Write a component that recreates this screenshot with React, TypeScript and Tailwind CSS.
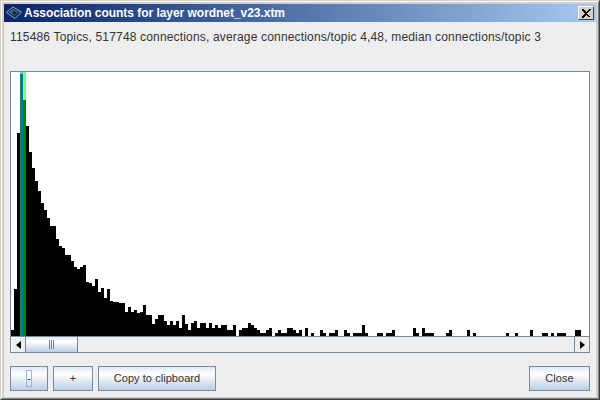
const bars: [number, number][] = [
  [11, 330], [14, 289], [17, 133], [26, 126], [29, 152], [32, 168], [35, 181], [38, 191], [41, 203], [44, 210], [47, 218], [50, 226], [53, 226], [56, 239], [59, 246], [62, 248], [65, 255], [68, 255], [71, 261], [74, 267], [77, 269], [80, 267], [83, 265], [86, 282], [89, 283], [92, 286], [95, 279], [98, 292], [101, 288], [104, 298], [107, 289], [110, 301], [113, 302], [116, 302], [119, 303], [122, 303], [125, 312], [128, 307], [131, 312], [134, 310], [137, 313], [140, 312], [143, 305], [146, 315],
  [149, 315], [152, 324], [155, 319], [158, 315], [161, 315], [164, 321], [167, 325], [170, 321], [173, 325], [176, 321], [179, 328], [182, 315], [185, 324], [188, 330], [191, 323], [194, 321], [197, 328], [200, 323], [203, 323], [206, 328], [209, 323], [212, 328], [215, 325], [218, 328], [221, 325], [224, 325], [227, 330], [230, 330], [233, 325], [239, 330], [242, 328], [245, 328], [248, 323], [251, 325], [254, 328], [257, 330], [260, 333], [263, 333], [266, 330], [269, 328], [275, 333], [278, 330], [281, 333], [284, 333], [287, 328], [290, 328], [293, 330], [296, 333], [299, 330],
  [305, 328], [311, 333], [320, 330], [323, 333], [329, 333], [332, 333], [335, 330], [344, 330], [347, 333], [353, 333], [356, 333], [359, 333], [362, 325], [365, 333], [377, 333], [380, 333], [386, 333], [389, 333], [392, 330], [413, 328], [416, 333], [422, 328], [425, 333], [428, 333], [431, 333], [446, 333], [449, 330], [467, 330], [473, 333], [506, 333], [515, 333], [530, 330], [542, 333], [545, 333], [551, 333], [557, 333], [560, 333], [563, 333], [575, 330], [578, 330],
];

function Btn({ w, children }: { w: string; children: React.ReactNode }) {
  return (
    <button className={`${w} h-[25px] border border-[#7a8a99] bg-gradient-to-b from-[#dde8f3] via-[#ffffff] via-30% to-[#b8cfe5] flex items-center justify-center text-[11px] tracking-[0.05px] text-[#333333] font-['Liberation_Sans',sans-serif]`}>
      {children}
    </button>
  );
}

export default function App() {
  return (
    <div className="w-[600px] h-[400px] border border-t-[#d4d0c8] border-l-[#d4d0c8] border-r-[#404040] border-b-[#404040] overflow-hidden">
      <div className="w-full h-full border border-t-white border-l-white border-r-[#808080] border-b-[#808080] bg-[#d4d0c8] p-[2px] flex flex-col">
        <div className="h-[18px] shrink-0 flex items-center bg-gradient-to-r from-[#0a246a] to-[#a6caf0] pl-[2px] pr-[2px]">
          <svg width="16" height="14" viewBox="0 0 16 14" className="shrink-0">
            <path d="M0.5 6.5 L7 1 L15.5 6 L9 12.5 Z" fill="#16294f" stroke="#8fb0c8" strokeWidth="1" />
            <path d="M3 6.5 L7 3 L12.5 6 L8.5 9.5 Z" fill="#3f6f8f" />
            <path d="M6 7 L8 5 L11 6.5 L8.5 8.5 Z" fill="#0c1a30" />
          </svg>
          <span className="ml-[2px] text-white font-bold text-[12px] tracking-[-0.04px] leading-none font-['Liberation_Sans',sans-serif] flex-1 whitespace-nowrap">
            Association counts for layer wordnet_v23.xtm
          </span>
          <div className="w-[16px] h-[14px] bg-[#d4d0c8] border border-t-white border-l-white border-r-[#404040] border-b-[#404040] flex items-center justify-center">
            <svg width="10" height="9" viewBox="0 0 10 9">
              <path d="M1 0.5 L8.5 8.5 M2 0.5 L9.5 8.5 M8.5 0.5 L1 8.5 M9.5 0.5 L2 8.5" stroke="#000" strokeWidth="1" shapeRendering="crispEdges" />
            </svg>
          </div>
        </div>
        <div className="flex-1 bg-[#eeeeee] flex flex-col pl-[6px] pr-[6px] pb-[6px]">
          <div className="h-[29px] flex items-center text-[12px] tracking-[0.17px] text-[#333333] font-['Liberation_Sans',sans-serif] whitespace-nowrap">
            115486 Topics, 517748 connections, average connections/topic 4,48, median connections/topic 3
          </div>
          <div className="mt-[20px] h-[282px] w-[580px] border border-[#7a8a99] flex flex-col">
            <div className="h-[264px] bg-white border-b border-b-[#7a8a99] box-content">
              <svg width="578" height="264" viewBox="11 72 578 264" shapeRendering="crispEdges" className="block">
                {bars.map(([x, top]) => (
                  <rect key={x} x={x} y={top} width="3" height={336 - top} fill="#000" />
                ))}
                <rect x="20" y="72" width="3" height="264" fill="#008080" />
                <rect x="20" y="72" width="3" height="2" fill="#40e0e0" />
                <rect x="23" y="72" width="3" height="28" fill="#80ff80" />
                <rect x="23" y="100" width="3" height="236" fill="#008000" />
              </svg>
            </div>
            <div className="flex-1 flex bg-[#eeeeee]">
              <div className="w-[15px] flex items-center justify-center border-r border-r-[#7a8a99] border-t border-l border-t-white border-l-white">
                <svg width="5" height="8" viewBox="0 0 5 8"><path d="M5 0 L5 8 L0 4 Z" fill="#000" /></svg>
              </div>
              <div className="w-[53px] border-x border-[#6382bf] bg-gradient-to-b from-[#dde8f3] via-[#ffffff] via-30% to-[#b8cfe5] flex items-center justify-center gap-[1px] -ml-[1px]">
                <div className="w-[1px] h-[9px] bg-[#6382bf]" />
                <div className="w-[1px] h-[9px] bg-[#6382bf]" />
                <div className="w-[1px] h-[9px] bg-[#6382bf]" />
              </div>
              <div className="flex-1" />
              <div className="w-[15px] flex items-center justify-center border-l border-l-[#7a8a99]">
                <svg width="5" height="8" viewBox="0 0 5 8"><path d="M0 0 L0 8 L5 4 Z" fill="#000" /></svg>
              </div>
            </div>
          </div>
          <div className="mt-[13px] flex">
            <Btn w="w-[38px] relative">
              -
              <span className="absolute left-[15px] top-[3px] w-[6px] h-[17px] border border-[#a3b8cc]" />
            </Btn>
            <div className="w-[5px]" />
            <Btn w="w-[40px]">+</Btn>
            <div className="w-[5px]" />
            <Btn w="w-[118px]">Copy to clipboard</Btn>
            <div className="flex-1" />
            <Btn w="w-[61px]">Close</Btn>
          </div>
        </div>
      </div>
    </div>
  );
}
